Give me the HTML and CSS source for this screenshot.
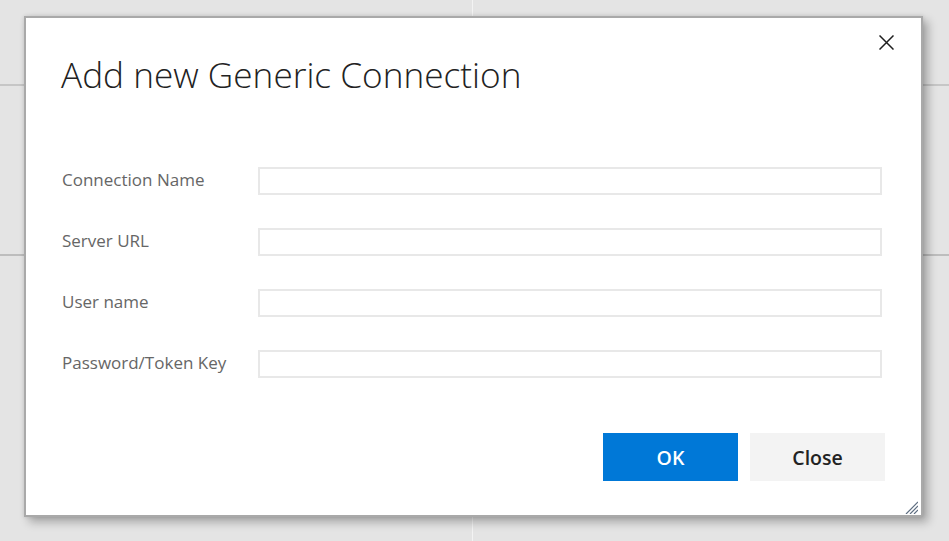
FILE: index.html
```html
<!DOCTYPE html>
<html lang="en">
<head>
<meta charset="utf-8">
<title>Add new Generic Connection</title>
<link rel="stylesheet" href="styles.css">
</head>
<body>
<div class="dialog" role="dialog" aria-labelledby="dlg-title">
  <button class="close-x" aria-label="Close">
    <svg width="15" height="15" viewBox="0 0 15 15"><path d="M0.5 0.5 L14.5 14.5 M14.5 0.5 L0.5 14.5" stroke="#1f1f1f" stroke-width="1.5" fill="none"/></svg>
  </button>
  <h1 class="title" id="dlg-title">Add new Generic Connection</h1>
  <form class="form">
    <label class="label" for="f1">Connection Name</label>
    <input class="field" id="f1" type="text">
    <label class="label" for="f2">Server URL</label>
    <input class="field" id="f2" type="text">
    <label class="label" for="f3">User name</label>
    <input class="field" id="f3" type="text">
    <label class="label" for="f4">Password/Token Key</label>
    <input class="field" id="f4" type="password">
  </form>
  <div class="actions">
    <button class="btn btn-primary" type="button">OK</button>
    <button class="btn btn-default" type="button">Close</button>
  </div>
  <svg class="grip" width="14" height="14" viewBox="0 0 14 14"><path d="M14 2 L2 14 M14 6 L6 14 M14 10 L10 14" stroke="#5f6f82" stroke-width="1.2" fill="none"/></svg>
</div>
</body>
</html>
```
FILE: styles.css
```css
html, body {
  margin: 0;
  padding: 0;
}
body {
  width: 949px;
  height: 541px;
  overflow: hidden;
  position: relative;
  font-family: "Open Sans", "Noto Sans", "Liberation Sans", sans-serif;
  background:
    linear-gradient(#c6c6c6, #c6c6c6) 0 84px / 100% 2px no-repeat,
    linear-gradient(#bdbdbd, #bdbdbd) 0 254px / 100% 2px no-repeat,
    linear-gradient(#f3f3f3, #f3f3f3) 472px 0 / 1px 100% no-repeat,
    #e4e4e4;
}
.dialog {
  position: absolute;
  left: 24px;
  top: 16px;
  width: 899px;
  height: 501px;
  box-sizing: border-box;
  background: #fff;
  border: 2px solid #a9a9a9;
  box-shadow: 5px 5px 9px rgba(0, 0, 0, 0.28), 0 0 4px rgba(0, 0, 0, 0.12);
  padding: 33px 36px 0 35px;
  display: flex;
  flex-direction: column;
}
.close-x {
  position: absolute;
  top: 17px;
  right: 27px;
  width: 15px;
  height: 15px;
  padding: 0;
  border: 0;
  background: none;
  display: flex;
}
.title {
  margin: 0;
  font-size: 35.2px;
  font-weight: 300;
  line-height: 46px;
  color: #222;
  letter-spacing: 0;
}
.form {
  margin-top: 70px;
  display: grid;
  grid-template-columns: 197px 624px;
  row-gap: 33px;
  align-items: center;
}
.label {
  font-size: 17px;
  color: #666;
  padding-left: 1px;
  margin-bottom: 4px;
}
.field {
  height: 28px;
  box-sizing: border-box;
  border: 2px solid #e8e8e8;
  margin: 0;
  padding: 0 6px;
  font: inherit;
  font-size: 15px;
  outline: none;
}
.actions {
  margin-top: 55px;
  display: flex;
  justify-content: flex-end;
  gap: 12px;
}
.btn {
  width: 135px;
  height: 48px;
  border: 0;
  margin: 0;
  font-family: "Open Sans", "Noto Sans", sans-serif;
  font-size: 19.5px;
  font-weight: 600;
  cursor: pointer;
}
.btn-primary {
  background: #0078d7;
  color: #fff;
}
.btn-default {
  background: #f3f3f3;
  color: #222;
}
.grip {
  position: absolute;
  right: 3px;
  bottom: 1px;
}
```
